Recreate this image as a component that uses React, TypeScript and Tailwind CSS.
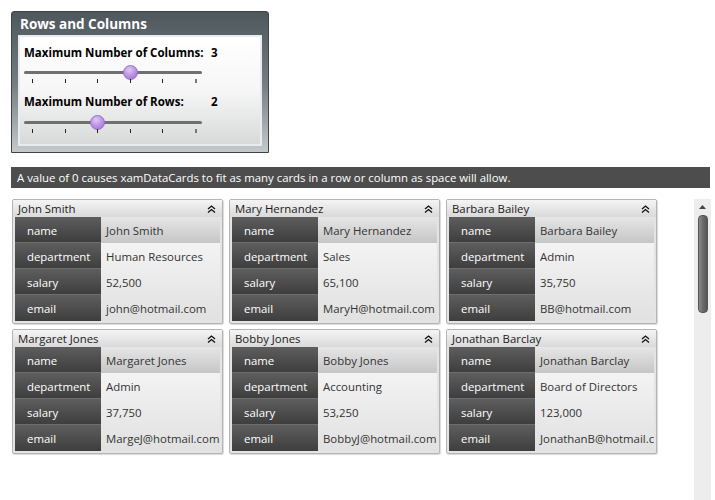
import React from 'react';

type Person = { name: string; department: string; salary: string; email: string };

const PEOPLE: Person[] = [
  { name: 'John Smith', department: 'Human Resources', salary: '52,500', email: 'john@hotmail.com' },
  { name: 'Mary Hernandez', department: 'Sales', salary: '65,100', email: 'MaryH@hotmail.com' },
  { name: 'Barbara Bailey', department: 'Admin', salary: '35,750', email: 'BB@hotmail.com' },
  { name: 'Margaret Jones', department: 'Admin', salary: '37,750', email: 'MargeJ@hotmail.com' },
  { name: 'Bobby Jones', department: 'Accounting', salary: '53,250', email: 'BobbyJ@hotmail.com' },
  { name: 'Jonathan Barclay', department: 'Board of Directors', salary: '123,000', email: 'JonathanB@hotmail.com' },
];

const TICKS = [0, 1, 2, 3, 4, 5];

function Slider({ value }: { value: number }) {
  // 6 ticks spread over the track, thumb sits on tick `value`
  const left = 8 + value * 32.6;
  return (
    <div className="relative h-[22px] w-[178px]">
      <div className="absolute left-0 right-0 top-[6px] h-[3px] rounded-full bg-[#707070]" />
      <div
        className="absolute top-0 h-[15px] w-[15px] rounded-full border border-[#9b70c8] bg-[radial-gradient(circle_at_40%_30%,#e0c8f4,#b48ae0_60%,#a070d0)]"
        style={{ left: left - 7 }}
      />
      {TICKS.map(t => (
        <div
          key={t}
          className={`absolute top-[14px] h-[4px] ${t === 5 ? 'w-[2px] bg-[#777]' : 'w-[1px] bg-[#222]'}`}
          style={{ left: 8 + t * 32.6 }}
        />
      ))}
    </div>
  );
}

function Card({ p }: { p: Person }) {
  const rows: [string, string][] = [
    ['name', p.name],
    ['department', p.department],
    ['salary', p.salary],
    ['email', p.email],
  ];
  return (
    <div className="w-[211px] h-[125px] rounded-[2px] border border-[#b4b4b4] bg-[#e4e4e4] shadow-[1px_1px_1px_rgba(0,0,0,0.15)] flex flex-col">
      {/* Header */}
      <div className="h-[17px] flex items-center justify-between pl-[5px] pr-[6px] bg-gradient-to-b from-[#f4f4f4] to-[#dadada] text-[11.4px] text-[#1a1a1a] leading-none">
        <span className="pt-[1px]">{p.name}</span>
        <svg width="9" height="8" viewBox="0 0 9 8">
          <path d="M1 4 L4.5 1 L8 4 M1 7.5 L4.5 4.5 L8 7.5" fill="none" stroke="#111" strokeWidth="1.3" />
        </svg>
      </div>
      {/* Fields */}
      <div className="mx-[2px] flex flex-1 mb-[2px] overflow-hidden">
        <div className="w-[86px] flex flex-col">
          {rows.map(([label]) => (
            <div
              key={label}
              className="h-[26px] flex items-center pl-[12px] pt-[2px] text-[11.4px] text-white border-b border-[#6e6e6e] last:border-b-0 bg-gradient-to-b from-[#5e5e5e] to-[#3e3e3e]"
            >
              {label}
            </div>
          ))}
        </div>
        <div className="flex-1 flex flex-col min-w-0">
          <div className="h-[26px] flex items-center pl-[5px] pt-[2px] text-[11.4px] text-[#333] whitespace-nowrap overflow-hidden bg-gradient-to-b from-[#e6e6e6] to-[#c6c6c6]">
            {rows[0][1]}
          </div>
          <div className="flex-1 flex flex-col bg-gradient-to-b from-[#f3f3f3] to-[#e1e1e1]">
            {rows.slice(1).map(([label, v]) => (
              <div key={label} className="h-[26px] flex items-center pl-[5px] pt-[2px] text-[11.4px] text-[#333] whitespace-nowrap overflow-hidden">
                {v}
              </div>
            ))}
          </div>
        </div>
      </div>
    </div>
  );
}

export default function App() {
  return (
    <div
      className="w-[715px] h-[500px] bg-white overflow-hidden flex flex-col"
      style={{ fontFamily: '"Open Sans", "Noto Sans", sans-serif' }}
    >
      {/* Rows and Columns panel */}
      <div className="mt-[11px] ml-[11px] w-[258px] h-[142px] rounded-t-[3px] border border-[#3c4448] bg-gradient-to-b from-[#4e575c] via-[#737c80] to-[#c4cacc] flex flex-col px-[6px] pb-[6px]">
        <div className="h-[23px] flex items-center pl-[2px] pt-[1px] text-[13.5px] font-bold text-white whitespace-nowrap">Rows and Columns</div>
        <div className="flex-1 border-2 border-[#e8ecee] bg-gradient-to-b from-white via-[#f6f6f6] to-[#d8dada] pl-[4px] pt-[9px]">
          <div className="flex text-[11.5px] font-bold text-black leading-[14px] whitespace-nowrap">
            <span className="w-[187px]">Maximum Number of Columns:</span>
            <span>3</span>
          </div>
          <div className="mt-[5px]">
            <Slider value={3} />
          </div>
          <div className="mt-[8px] flex text-[11.5px] font-bold text-black leading-[14px] whitespace-nowrap">
            <span className="w-[187px]">Maximum Number of Rows:</span>
            <span>2</span>
          </div>
          <div className="mt-[6px]">
            <Slider value={2} />
          </div>
        </div>
      </div>

      {/* Info bar */}
      <div className="mt-[14px] ml-[11px] w-[699px] h-[21px] bg-[#4d4d4d] flex items-center pl-[6px] text-[11.4px] text-white whitespace-nowrap">
        A value of 0 causes xamDataCards to fit as many cards in a row or column as space will allow.
      </div>

      {/* Cards + scrollbar */}
      <div className="mt-[11px] flex flex-1">
        <div className="ml-[12px] grid grid-cols-[211px_211px_211px] gap-x-[6px] gap-y-[5px] content-start">
          {PEOPLE.map(p => (
            <Card key={p.name} p={p} />
          ))}
        </div>
        <div className="ml-[37px] w-[17px] bg-[#ededed] flex flex-col items-center pt-[6px]">
          <svg width="7" height="4" viewBox="0 0 7 4">
            <path d="M0 4 L3.5 0 L7 4 Z" fill="#444" />
          </svg>
          <div className="mt-[6px] w-[10px] h-[98px] rounded-[4px] border border-[#555] bg-gradient-to-r from-[#8a8a8a] via-[#6a6a6a] to-[#555]" />
        </div>
      </div>
    </div>
  );
}
